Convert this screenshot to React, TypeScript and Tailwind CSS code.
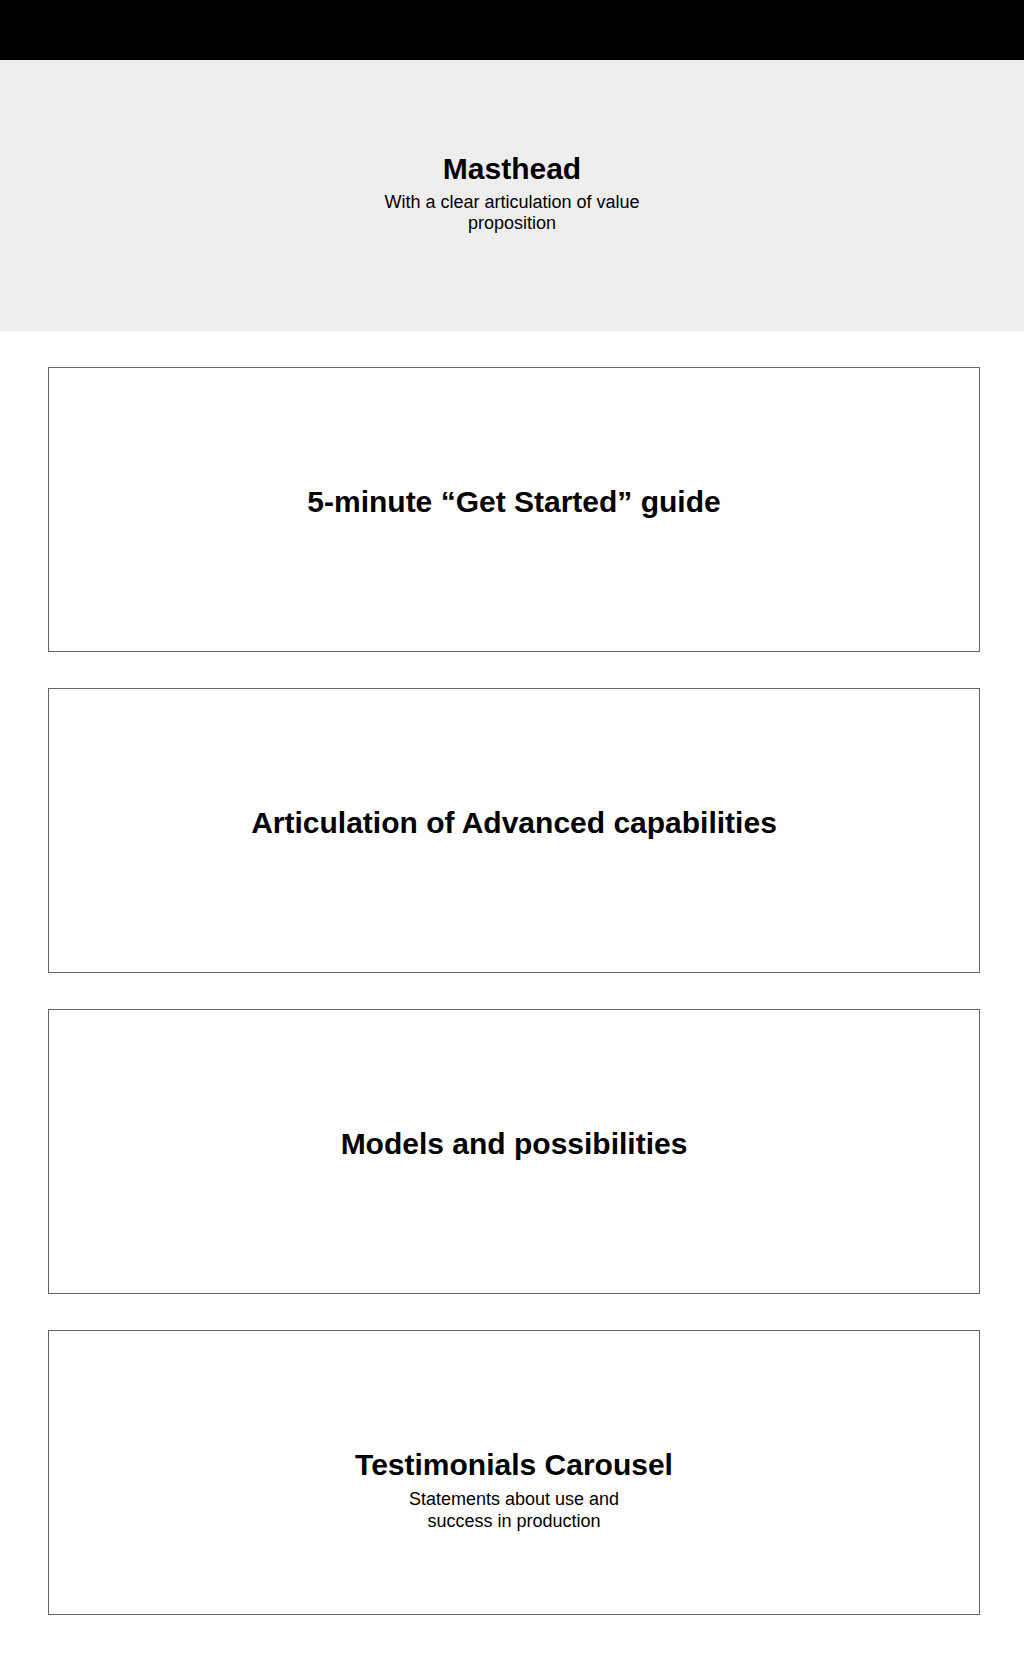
import React from "react";

const font = { fontFamily: '"Liberation Sans", Arial, Helvetica, sans-serif' };

function Box({ title, subtitle }: { title: string; subtitle?: string }) {
  return (
    <section className="h-[285px] border border-[#666666] bg-white flex flex-col items-center pt-[116px]">
      <h2 className="text-[30px] leading-[36px] font-bold text-black text-center">{title}</h2>
      {subtitle && (
        <p className="mt-[6px] max-w-[268px] text-[18px] leading-[21.5px] text-black text-center">{subtitle}</p>
      )}
    </section>
  );
}

export default function App() {
  return (
    <div className="min-h-[1670px] w-full bg-white" style={font}>
      <header className="h-[60px] bg-black" />
      <div className="h-[271px] bg-[#eeeeee] flex flex-col items-center justify-center pb-[6px]">
        <h1 className="text-[30px] leading-[36px] font-bold text-black text-center">Masthead</h1>
        <p className="mt-[5px] max-w-[268px] text-[18px] leading-[21.5px] text-black text-center">
          With a clear articulation of value proposition
        </p>
      </div>
      <main className="flex flex-col gap-[36px] pt-[36px] pb-[55px] pl-[48px] pr-[44px]">
        <Box title="5-minute “Get Started” guide" />
        <Box title="Articulation of Advanced capabilities" />
        <Box title="Models and possibilities" />
        <Box title="Testimonials Carousel" subtitle="Statements about use and success in production" />
      </main>
    </div>
  );
}
